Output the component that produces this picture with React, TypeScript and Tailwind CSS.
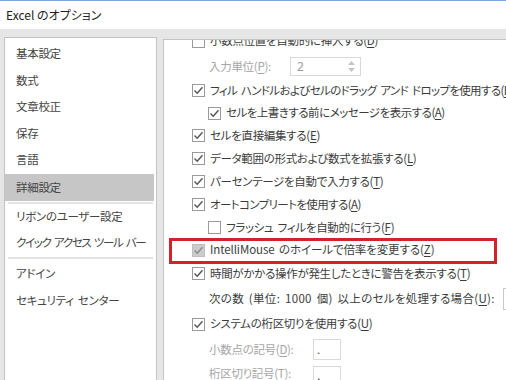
import React from "react";

const FONT = "font-['Noto_Sans_CJK_JP','Noto_Sans',sans-serif] [font-feature-settings:'palt']";

function U({ c }: { c: string }) {
  return <span className="underline underline-offset-[2px]">{c}</span>;
}

function Check({ checked = true, disabled = false }: { checked?: boolean; disabled?: boolean }) {
  return (
    <div
      className={`w-[13px] h-[13px] shrink-0 border flex items-center justify-center ${
        disabled ? "bg-[#cccccc] border-[#bdbdbd]" : "bg-white border-[#9a9a9a]"
      }`}
    >
      {checked && (
        <svg width="11" height="11" viewBox="0 0 11 11">
          <polyline
            points="1.5,5.5 4.2,8.2 9.5,2.2"
            fill="none"
            stroke={disabled ? "#8a8a8a" : "#555555"}
            strokeWidth="1.4"
          />
        </svg>
      )}
    </div>
  );
}

function Row({
  h,
  pl,
  check,
  disabledCheck,
  children,
  extra,
}: {
  h: string;
  pl: string;
  check?: boolean | null;
  disabledCheck?: boolean;
  children: React.ReactNode;
  extra?: React.ReactNode;
}) {
  return (
    <div className={`${h} ${pl} flex items-center relative`}>
      {check !== null && check !== undefined && (
        <div className="mr-[5px]">
          <Check checked={check} disabled={disabledCheck} />
        </div>
      )}
      {children}
      {extra}
    </div>
  );
}

const L1 = "pl-[28px]";
const L2 = "pl-[44px]";
const LT = "pl-[45px]";

export default function App() {
  const navTop = ["基本設定", "数式", "文章校正", "保存", "言語"];
  return (
    <div className={`w-[506px] h-[380px] overflow-hidden bg-[#e6e6e6] text-[11.5px] tracking-[-0.3px] [word-spacing:2px] text-[#3c3c3c] ${FONT} flex flex-col`}>
      {/* title bar */}
      <div className="h-[29px] shrink-0 bg-white border-t border-[#7ea6d8] flex items-center pl-[6px] text-[12px] tracking-normal [word-spacing:0px] text-[#1e1e1e]">
        Excel のオプション
      </div>
      <div className="flex-1 flex min-h-0">
        {/* left nav */}
        <div className="ml-[4px] mt-[8px] w-[153px] bg-white border border-[#c3c3c3] border-b-0 flex flex-col pt-[3px] text-[#444444]">
          {navTop.map((t, i) => (
            <div key={t} className={`${i % 2 === 0 ? "h-[26px]" : "h-[27px]"} flex items-center pl-[11px] whitespace-nowrap`}>
              {t}
            </div>
          ))}
          <div className="h-[27px] mt-[1px] mr-[2px] bg-[#c6c6c6] flex items-center pl-[11px]">詳細設定</div>
          <div className="h-[2px] mt-[1px] mx-[3px] bg-[#e3e3e3]" />
          <div className="h-[26px] flex items-center pl-[11px] whitespace-nowrap">リボンのユーザー設定</div>
          <div className="h-[26px] flex items-center pl-[11px] whitespace-nowrap tracking-[-1.3px] [word-spacing:2px]">クイック アクセス ツール バー</div>
          <div className="h-[2px] mt-[1px] mx-[3px] bg-[#e3e3e3]" />
          <div className="h-[27px] mt-[1px] flex items-center pl-[11px]">アドイン</div>
          <div className="h-[27px] flex items-center pl-[11px] whitespace-nowrap">セキュリティ センター</div>
        </div>
        {/* right panel */}
        <div className="ml-[6px] mt-[10px] flex-1 bg-white border-l border-t border-[#c3c3c3] overflow-hidden">
          <div className="-mt-[12px] flex flex-col whitespace-nowrap">
            <Row h="h-[26px]" pl={L1} check={false}>
              <span>小数点位置を自動的に挿入する(<U c="D" />)</span>
            </Row>
            <Row
              h="h-[25px]"
              pl={LT}
              extra={
                <div className="w-[71px] h-[19px] border border-[#d9d9d9] flex items-center justify-between pl-[6px] pr-[5px] text-[#9a9a9a]">
                  <span className="font-['Noto_Sans',sans-serif] text-[12px]">2</span>
                  <div className="flex flex-col gap-[3px]">
                    <svg width="7" height="4" viewBox="0 0 7 4">
                      <polygon points="0,4 3.5,0 7,4" fill="#c4c4c4" />
                    </svg>
                    <svg width="7" height="4" viewBox="0 0 7 4">
                      <polygon points="0,0 3.5,4 7,0" fill="#c4c4c4" />
                    </svg>
                  </div>
                </div>
              }
            >
              <span className="w-[81px] text-[#a6a6a6]">
                入力単位(<U c="P" />):
              </span>
            </Row>
            <Row h="h-[23px]" pl={L1} check>
              <span className="tracking-[-0.65px]">フィル ハンドルおよびセルのドラッグ アンド ドロップを使用する(<U c="D" />)</span>
            </Row>
            <Row h="h-[22px]" pl={L2} check>
              <span className="tracking-[-0.5px]">セルを上書きする前にメッセージを表示する(<U c="A" />)</span>
            </Row>
            <Row h="h-[23px]" pl={L1} check>
              <span>セルを直接編集する(<U c="E" />)</span>
            </Row>
            <Row h="h-[23px]" pl={L1} check>
              <span>データ範囲の形式および数式を拡張する(<U c="L" />)</span>
            </Row>
            <Row h="h-[23px]" pl={L1} check>
              <span>パーセンテージを自動で入力する(<U c="T" />)</span>
            </Row>
            <Row h="h-[23px]" pl={L1} check>
              <span className="tracking-[-0.6px]">オートコンプリートを使用する(<U c="A" />)</span>
            </Row>
            <Row h="h-[23px]" pl={L2} check={false}>
              <span>フラッシュ フィルを自動的に行う(<U c="F" />)</span>
            </Row>
            <Row
              h="h-[22px]"
              pl={L1}
              check
              disabledCheck
              extra={
                <div className="absolute left-[5px] top-[-1px] w-[328px] h-[26px] border-[3px] border-[#d2232a]" />
              }
            >
              <span className="tracking-[-0.1px]">IntelliMouse のホイールで倍率を変更する(<U c="Z" />)</span>
            </Row>
            <Row h="h-[25px]" pl={L1} check>
              <span>時間がかかる操作が発生したときに警告を表示する(<U c="T" />)</span>
            </Row>
            <Row
              h="h-[25px]"
              pl={LT}
              extra={<div className="w-[40px] h-[22px] shrink-0 border border-[#c8c8c8]" />}
            >
              <span className="w-[294px] shrink-0 tracking-[0.3px]">
                次の数 (単位: 1000 個) 以上のセルを処理する場合(<U c="U" />):
              </span>
            </Row>
            <Row h="h-[26px]" pl={L1} check>
              <span>システムの桁区切りを使用する(<U c="U" />)</span>
            </Row>
            <Row
              h="h-[25px]"
              pl={LT}
              extra={
                <div className="w-[28px] h-[21px] border border-[#d9d9d9] flex items-center pl-[3px] text-[#555]">
                  .
                </div>
              }
            >
              <span className="w-[104px] shrink-0 text-[#a6a6a6]">
                小数点の記号(<U c="D" />):
              </span>
            </Row>
            <Row
              h="h-[24px]"
              pl={LT}
              extra={
                <div className="w-[28px] h-[21px] mt-[4px] border border-[#d9d9d9] flex items-center pl-[3px] text-[#555]">
                  ,
                </div>
              }
            >
              <span className="w-[104px] shrink-0 text-[#a6a6a6]">
                桁区切り記号(<U c="T" />):
              </span>
            </Row>
          </div>
        </div>
      </div>
    </div>
  );
}
